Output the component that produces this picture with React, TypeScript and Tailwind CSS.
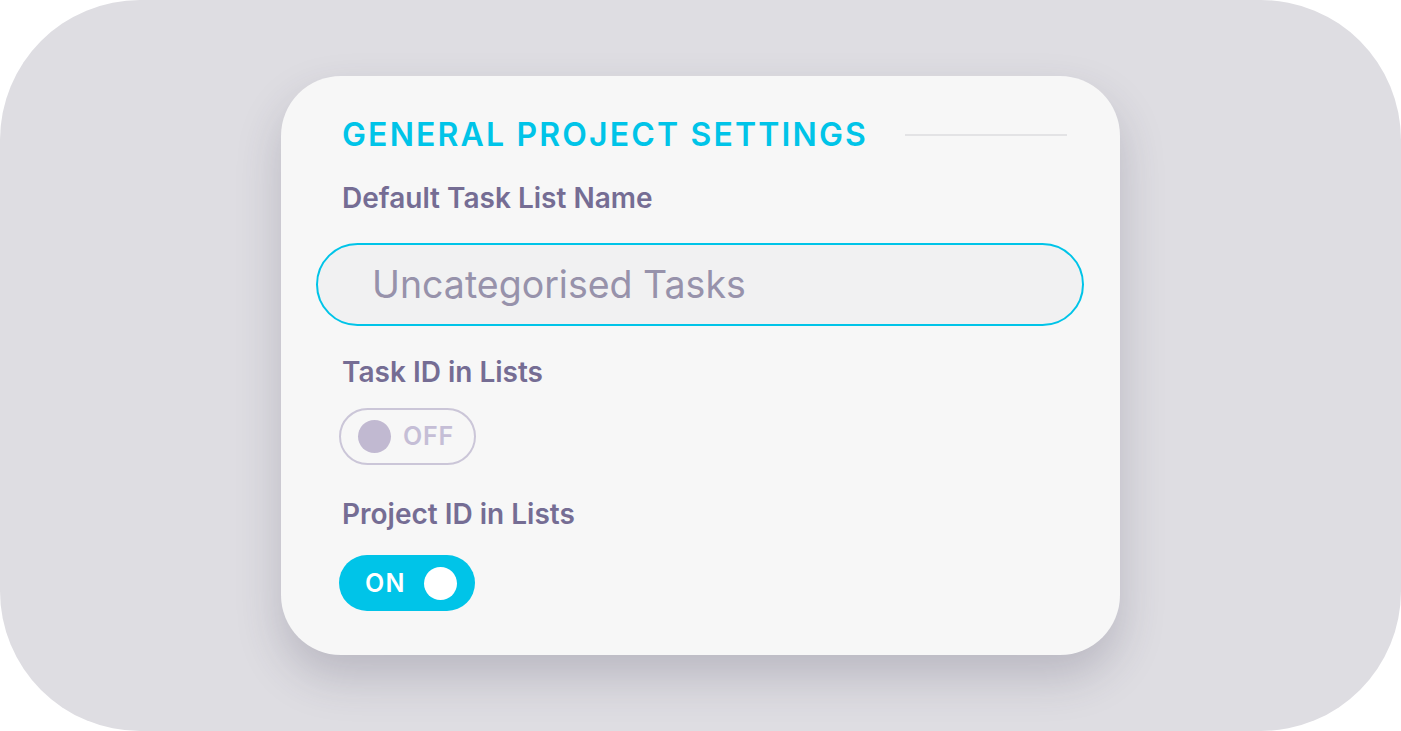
import React from "react";

export default function App() {
  return (
    <div className="w-[1401px] h-[731px] bg-white" style={{ fontFamily: "Inter, 'Noto Sans', sans-serif" }}>
      <div className="w-full h-full bg-[#dedde2] rounded-[140px] flex items-center justify-center">
        <div className="w-[839px] h-[579px] bg-[#f7f7f7] rounded-[60px] shadow-[0_22px_45px_rgba(60,55,80,0.22)] pt-[41px] pl-[61px] pr-[53px] flex flex-col">
          <div className="flex items-center">
            <h1 className="text-[32px] leading-[36px] font-semibold tracking-[0.067em] text-[#00c4e8] whitespace-nowrap">
              GENERAL PROJECT SETTINGS
            </h1>
            <div className="ml-[37px] flex-1 h-[2px] bg-[#e3e3e5]" />
          </div>
          <div className="mt-[29px] text-[28px] leading-[32px] font-semibold text-[#756d94]">Default Task List Name</div>
          <div className="mt-[29px] -ml-[26px] w-[768px] h-[83px] rounded-full border-2 border-[#00c4e8] bg-[#f1f1f2] flex items-center pl-[54px]">
            <span className="text-[37.5px] leading-none text-[#9792ab]">Uncategorised Tasks</span>
          </div>
          <div className="mt-[30px] text-[28px] leading-[32px] font-semibold text-[#756d94]">Task ID in Lists</div>
          <div className="mt-[20px] -ml-[3px] w-[137px] h-[57px] rounded-full border-2 border-[#cbc6d8] flex items-center pl-[17px]">
            <div className="w-[33px] h-[33px] rounded-full bg-[#c1b9d1]" />
            <span className="ml-[12px] text-[25px] leading-none font-semibold tracking-[0.03em] text-[#c5bed6]">OFF</span>
          </div>
          <div className="mt-[33px] text-[28px] leading-[32px] font-semibold text-[#756d94]">Project ID in Lists</div>
          <div className="mt-[25px] -ml-[3px] w-[136px] h-[56px] rounded-full bg-[#00c4e8] flex items-center pl-[26px] pr-[18px] justify-between">
            <span className="text-[25px] leading-none font-semibold tracking-[0.05em] text-white">ON</span>
            <div className="w-[33px] h-[33px] rounded-full bg-white" />
          </div>
        </div>
      </div>
    </div>
  );
}
